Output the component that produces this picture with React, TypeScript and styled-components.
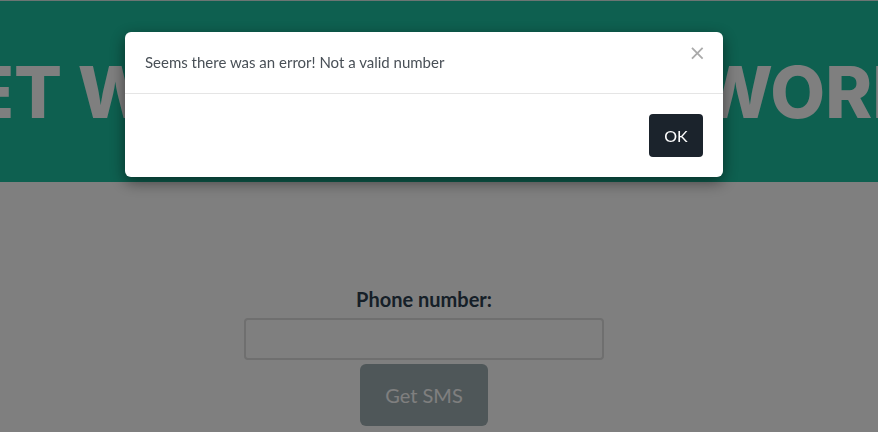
import React from "react";
import styled, { createGlobalStyle } from "styled-components";

const GlobalStyle = createGlobalStyle`
  html, body { margin: 0; padding: 0; }
  body {
    font-family: Lato, "Open Sans", sans-serif;
    background: #ffffff;
    color: #212529;
    overflow: hidden;
  }
`;

const Page = styled.div`
  width: 878px;
  height: 432px;
  display: flex;
  flex-direction: column;
  overflow: hidden;
`;

const Hero = styled.header`
  height: 181px;
  border-top: 1px solid #d6ebe6;
  background: #1cc0a0;
  display: flex;
  align-items: center;
  justify-content: center;
  overflow: hidden;
  padding-right: 36px;
`;

const HeroTitle = styled.h1`
  margin: 0;
  flex-shrink: 0;
  white-space: nowrap;
  font-family: Inter, sans-serif;
  font-weight: 800;
  font-size: 71px;
  letter-spacing: 0;
  color: #ffffff;
`;

const Main = styled.main`
  display: flex;
  flex-direction: column;
  align-items: center;
  padding: 105px 30px 0 0;
`;

const Label = styled.label`
  font-size: 20px;
  font-weight: 700;
  color: #2c3e50;
  line-height: 24px;
  margin-bottom: 7px;
`;

const PhoneInput = styled.input`
  box-sizing: border-box;
  width: 360px;
  height: 42px;
  border: 2px solid #dedede;
  border-radius: 4px;
  background: #fff;
  font-family: Lato, sans-serif;
  font-size: 16px;
`;

const SmsButton = styled.button`
  margin-top: 4px;
  width: 128px;
  height: 62px;
  border: none;
  border-radius: 6px;
  background: #9eaeb2;
  color: #ffffff;
  font-family: Lato, sans-serif;
  font-size: 20px;
`;

const Backdrop = styled.div`
  position: fixed;
  inset: 0;
  background: rgba(0, 0, 0, 0.5);
  display: flex;
  justify-content: center;
  align-items: flex-start;
  padding-right: 30px;
`;

const Dialog = styled.div`
  margin-top: 32px;
  width: 598px;
  background: #fff;
  border-radius: 6px;
  box-shadow: 0 5px 15px rgba(0, 0, 0, 0.5);
  display: flex;
  flex-direction: column;
`;

const DialogHeader = styled.div`
  display: flex;
  align-items: flex-start;
  justify-content: space-between;
  padding: 20px;
  border-bottom: 1px solid #e5e5e5;
`;

const DialogText = styled.p`
  margin: 0;
  font-size: 15px;
  line-height: 21px;
  color: #495057;
`;

const CloseButton = styled.button`
  border: none;
  background: none;
  padding: 0;
  margin: -11px -3px 0 0;
  font-family: "DejaVu Sans", sans-serif;
  font-size: 21px;
  line-height: 24px;
  color: #aaaaaa;
`;

const DialogFooter = styled.div`
  display: flex;
  justify-content: flex-end;
  padding: 20px;
`;

const OkButton = styled.button`
  width: 54px;
  height: 43px;
  border: none;
  border-radius: 4px;
  background: #1b232c;
  color: #ffffff;
  font-family: Lato, sans-serif;
  font-size: 16px;
`;

export default function App() {
  return (
    <>
      <GlobalStyle />
      <Page>
        <Hero>
          <HeroTitle>GET WHAT YOU NEED WORK</HeroTitle>
        </Hero>
        <Main>
          <Label htmlFor="phone">Phone number:</Label>
          <PhoneInput id="phone" type="tel" />
          <SmsButton disabled>Get SMS</SmsButton>
        </Main>
      </Page>
      <Backdrop>
        <Dialog role="dialog">
          <DialogHeader>
            <DialogText>Seems there was an error! Not a valid number</DialogText>
            <CloseButton aria-label="Close">×</CloseButton>
          </DialogHeader>
          <DialogFooter>
            <OkButton>OK</OkButton>
          </DialogFooter>
        </Dialog>
      </Backdrop>
    </>
  );
}
